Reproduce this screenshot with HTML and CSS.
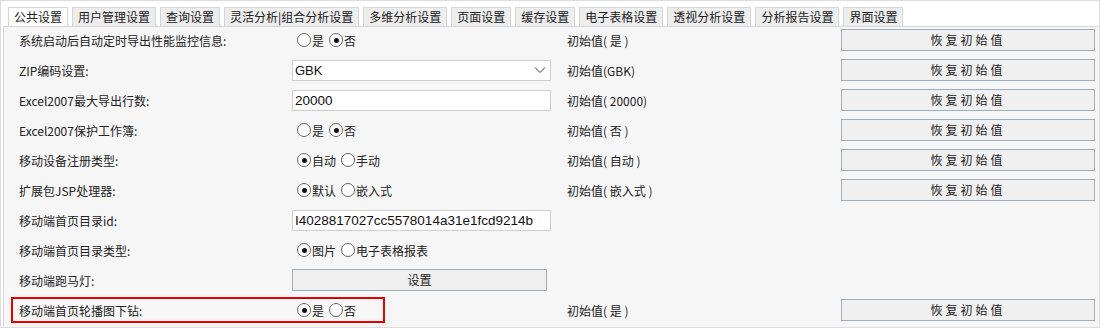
FILE: index.html
```html
<!DOCTYPE html>
<html lang="zh-CN">
<head>
<meta charset="utf-8">
<link rel="stylesheet" href="styles.css">
</head>
<body>
<div class="wrap">
  <div class="tabs">
    <div class="tab active">公共设置</div>
    <div class="tab">用户管理设置</div>
    <div class="tab">查询设置</div>
    <div class="tab">灵活分析|组合分析设置</div>
    <div class="tab">多维分析设置</div>
    <div class="tab">页面设置</div>
    <div class="tab">缓存设置</div>
    <div class="tab">电子表格设置</div>
    <div class="tab">透视分析设置</div>
    <div class="tab">分析报告设置</div>
    <div class="tab">界面设置</div>
  </div>
  <div class="panel">
    <div class="row">
      <div class="label">系统启动后自动定时导出性能监控信息:</div>
      <div class="ctrl radios"><span class="radio"></span><span class="rt">是</span><span class="radio on"></span><span class="rt">否</span></div>
      <div class="init">初始值( 是 )</div>
      <div class="btn">恢复初始值</div>
    </div>
    <div class="row">
      <div class="label">ZIP编码设置:</div>
      <div class="ctrl"><div class="select"><span>GBK</span><svg width="12" height="8" viewBox="0 0 12 8"><path d="M1 1.5 L6 6.5 L11 1.5" fill="none" stroke="#333" stroke-width="1"/></svg></div></div>
      <div class="init">初始值(GBK)</div>
      <div class="btn">恢复初始值</div>
    </div>
    <div class="row">
      <div class="label">Excel2007最大导出行数:</div>
      <div class="ctrl"><div class="input">20000</div></div>
      <div class="init">初始值( 20000)</div>
      <div class="btn">恢复初始值</div>
    </div>
    <div class="row">
      <div class="label">Excel2007保护工作簿:</div>
      <div class="ctrl radios"><span class="radio"></span><span class="rt">是</span><span class="radio on"></span><span class="rt">否</span></div>
      <div class="init">初始值( 否 )</div>
      <div class="btn">恢复初始值</div>
    </div>
    <div class="row">
      <div class="label">移动设备注册类型:</div>
      <div class="ctrl radios"><span class="radio on"></span><span class="rt">自动</span><span class="radio"></span><span class="rt">手动</span></div>
      <div class="init">初始值( 自动 )</div>
      <div class="btn">恢复初始值</div>
    </div>
    <div class="row">
      <div class="label">扩展包JSP处理器:</div>
      <div class="ctrl radios"><span class="radio on"></span><span class="rt">默认</span><span class="radio"></span><span class="rt">嵌入式</span></div>
      <div class="init">初始值( 嵌入式 )</div>
      <div class="btn">恢复初始值</div>
    </div>
    <div class="row">
      <div class="label">移动端首页目录id:</div>
      <div class="ctrl"><div class="input">I4028817027cc5578014a31e1fcd9214b</div></div>
      <div class="init"></div>
      <div></div>
    </div>
    <div class="row">
      <div class="label">移动端首页目录类型:</div>
      <div class="ctrl radios"><span class="radio on"></span><span class="rt">图片</span><span class="radio"></span><span class="rt">电子表格报表</span></div>
      <div class="init"></div>
      <div></div>
    </div>
    <div class="row">
      <div class="label">移动端跑马灯:</div>
      <div class="ctrl"><div class="btn set">设置</div></div>
      <div class="init"></div>
      <div></div>
    </div>
    <div class="row marked">
      <div class="label">移动端首页轮播图下钻:</div>
      <div class="ctrl radios"><span class="radio on"></span><span class="rt">是</span><span class="radio"></span><span class="rt">否</span></div>
      <div class="init">初始值( 是 )</div>
      <div class="btn">恢复初始值</div>
    </div>
  </div>
</div>
</body>
</html>
```

FILE: styles.css
```css
html, body {
  margin: 0;
  padding: 0;
  background: #ffffff;
}
body {
  font-family: "Noto Sans CJK SC", "Noto Sans", sans-serif;
  font-size: 12px;
  color: #222;
}
.wrap {
  width: 1100px;
  height: 328px;
  box-sizing: border-box;
  border: 1px solid #dcdcdc;
  display: flex;
  flex-direction: column;
  overflow: hidden;
}
.tabs {
  display: flex;
  gap: 4px;
  padding: 6px 0 0 7px;
  height: 19px;
  flex: none;
}
.tab {
  height: 19px;
  box-sizing: border-box;
  padding: 0 5px;
  border: 1px solid #d6d6d6;
  border-bottom: none;
  background: #ededed;
  line-height: 18px;
  color: #222;
  white-space: nowrap;
}
.tab.active {
  background: #ffffff;
}
.panel {
  flex: 1;
  margin-left: 2px;
  border-top: 1px solid #d6d6d6;
  border-left: 1px solid #d6d6d6;
  background: #f6f6f6;
  display: flex;
  flex-direction: column;
}
.row {
  height: 30px;
  box-sizing: border-box;
  padding-bottom: 4px;
  display: grid;
  grid-template-columns: 273px 275px 274px 254px;
  align-items: center;
  padding-left: 15px;
  position: relative;
}
.row.marked::before {
  content: "";
  position: absolute;
  left: 7px;
  top: 0;
  width: 374px;
  height: 26px;
  box-sizing: border-box;
  border: 2px solid #e60000;
  pointer-events: none;
}
.label {
  white-space: nowrap;
}
.ctrl {
  display: flex;
  align-items: center;
}
.radios {
  padding-left: 5px;
}
.radio {
  width: 14px;
  height: 14px;
  box-sizing: border-box;
  border: 1px solid #666;
  border-radius: 50%;
  background: #fff;
  position: relative;
  flex: none;
}
.radio.on::after {
  content: "";
  position: absolute;
  left: 3.5px;
  top: 3.5px;
  width: 5px;
  height: 5px;
  border-radius: 50%;
  background: #111;
}
.rt {
  margin: 0 5px 0 1px;
}
.select, .input {
  width: 259px;
  height: 21px;
  box-sizing: border-box;
  border: 1px solid #cfcfcf;
  background: #fff;
  font-family: "Liberation Sans", Arial, sans-serif;
  font-size: 13.5px;
  color: #111;
  padding-left: 2px;
  line-height: 19px;
  white-space: nowrap;
  overflow: hidden;
}
.select {
  display: flex;
  align-items: center;
  justify-content: space-between;
  padding-right: 4px;
  font-size: 13px;
}
.init {
  white-space: nowrap;
}
.btn {
  height: 22px;
  box-sizing: border-box;
  border: 1px solid #9eaebd;
  background: #f0f0f0;
  text-align: center;
  line-height: 20px;
  letter-spacing: 3px;
  color: #222;
}
.btn.set {
  width: 255px;
  letter-spacing: 0;
}
```
